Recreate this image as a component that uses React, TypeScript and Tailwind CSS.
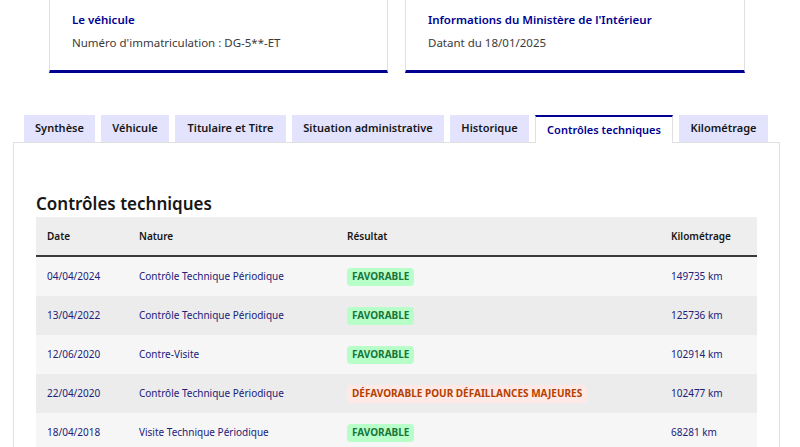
import React from "react";

const rows = [
  { date: "04/04/2024", nature: "Contrôle Technique Périodique", ok: true, res: "FAVORABLE", km: "149735 km" },
  { date: "13/04/2022", nature: "Contrôle Technique Périodique", ok: true, res: "FAVORABLE", km: "125736 km" },
  { date: "12/06/2020", nature: "Contre-Visite", ok: true, res: "FAVORABLE", km: "102914 km" },
  { date: "22/04/2020", nature: "Contrôle Technique Périodique", ok: false, res: "DÉFAVORABLE POUR DÉFAILLANCES MAJEURES", km: "102477 km" },
  { date: "18/04/2018", nature: "Visite Technique Périodique", ok: true, res: "FAVORABLE", km: "68281 km" },
];

const tabs = [
  { label: "Synthèse", w: "w-[71px]" },
  { label: "Véhicule", w: "w-[68px]" },
  { label: "Titulaire et Titre", w: "w-[111px]" },
  { label: "Situation administrative", w: "w-[152px]" },
  { label: "Historique", w: "w-[79px]" },
  { label: "Contrôles techniques", w: "w-[138px]", active: true },
  { label: "Kilométrage", w: "w-[89px]" },
];

export default function App() {
  return (
    <div className="w-[800px] h-[447px] overflow-hidden bg-white relative" style={{ fontFamily: '"Noto Sans", sans-serif' }}>
      <div className="flex gap-[17px] pl-[49px]">
        <div className="w-[339px] h-[73px] border-x border-[#e0e0e0] border-b-[3px] border-b-[#000091] pl-[22px] pt-[11px]">
          <div className="text-[11.5px] font-semibold text-[#000091] leading-[18px]">Le véhicule</div>
          <div className="text-[11.5px] text-[#3a3a3a] leading-[18px] mt-[5px]">Numéro d'immatriculation : DG-5**-ET</div>
        </div>
        <div className="w-[340px] h-[73px] border-x border-[#e0e0e0] border-b-[3px] border-b-[#000091] pl-[22px] pt-[11px]">
          <div className="text-[11.5px] font-semibold text-[#000091] leading-[18px]">Informations du Ministère de l'Intérieur</div>
          <div className="text-[11.5px] text-[#3a3a3a] leading-[18px] mt-[5px]">Datant du 18/01/2025</div>
        </div>
      </div>

      <div className="mt-[42px] flex gap-[6px] pl-[24px] relative z-10">
        {tabs.map((t) =>
          t.active ? (
            <div
              key={t.label}
              className={`${t.w} h-[28px] bg-white border-t-2 border-t-[#000091] border-x border-x-[#e0e0e0] flex items-center justify-center text-[11px] font-semibold text-[#000091] mb-[-1px]`}
            >
              {t.label}
            </div>
          ) : (
            <div
              key={t.label}
              className={`${t.w} h-[27px] bg-[#e3e3fd] flex items-center justify-center text-[11px] font-semibold text-[#161616]`}
            >
              {t.label}
            </div>
          )
        )}
      </div>

      <div className="ml-[13px] w-[767px] border border-[#e0e0e0] pt-[48px] pl-[22px] h-[320px]">
        <h2 className="text-[17px] font-semibold text-[#161616] leading-[26px]">Contrôles techniques</h2>
        <div className="w-[721px]">
          <div className="flex h-[40px] bg-[#eeeeee] border-b-2 border-[#3a3a3a] items-center text-[10px] font-semibold text-[#161616]">
            <div className="w-[103px] pl-[11px]">Date</div>
            <div className="w-[208px]">Nature</div>
            <div className="w-[324px]">Résultat</div>
            <div>Kilométrage</div>
          </div>
          {rows.map((r, i) => (
            <div
              key={i}
              className={`flex h-[39px] items-center text-[10px] text-[#21217a] ${i % 2 === 0 ? "bg-[#f6f6f6]" : "bg-[#ececec]"}`}
            >
              <div className="w-[103px] pl-[11px]">{r.date}</div>
              <div className="w-[208px]">{r.nature}</div>
              <div className="w-[324px]">
                <span
                  className={`inline-flex items-center h-[18px] px-[5px] rounded-[4px] text-[10px] font-bold ${
                    r.ok ? "bg-[#b8fec9] text-[#18753c]" : "bg-[#ffe9e6] text-[#b34000]"
                  }`}
                >
                  {r.res}
                </span>
              </div>
              <div>{r.km}</div>
            </div>
          ))}
        </div>
      </div>
    </div>
  );
}
